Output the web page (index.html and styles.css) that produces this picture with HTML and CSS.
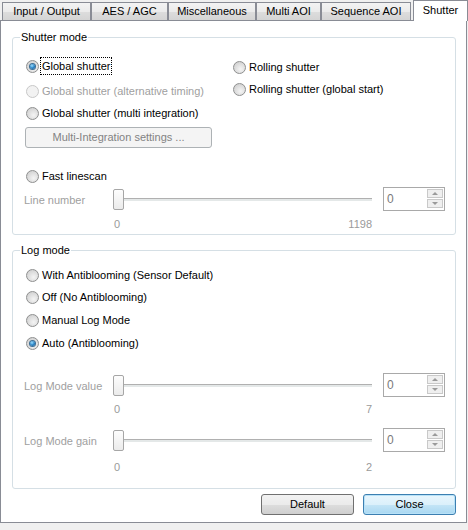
FILE: index.html
```html
<!DOCTYPE html>
<html>
<head>
<meta charset="utf-8">
<link rel="stylesheet" href="styles.css">
</head>
<body>
<div class="tabs">
  <div class="tab w1">Input / Output</div>
  <div class="tab w2">AES / AGC</div>
  <div class="tab w3">Miscellaneous</div>
  <div class="tab w4">Multi AOI</div>
  <div class="tab w5">Sequence AOI</div>
  <div class="tab sel">Shutter</div>
</div>
<div class="panel">
  <div class="group g1">
    <div class="legend">Shutter mode</div>
    <div class="cols">
      <div class="col left">
        <div class="row"><span class="radio on"></span><span class="lbl focus">Global shutter</span></div>
        <div class="row r2 dis"><span class="radio off"></span><span class="lbl">Global shutter (alternative timing)</span></div>
        <div class="row r3"><span class="radio"></span><span class="lbl">Global shutter (multi integration)</span></div>
        <div class="btn-dis">Multi-Integration settings ...</div>
      </div>
      <div class="col right">
        <div class="row"><span class="radio"></span><span class="lbl">Rolling shutter</span></div>
        <div class="row r2b"><span class="radio"></span><span class="lbl">Rolling shutter (global start)</span></div>
      </div>
    </div>
    <div class="row fast"><span class="radio"></span><span class="lbl">Fast linescan</span></div>
    <div class="srow s1">
      <div class="slabel">Line number</div>
      <div class="slider"><span class="thumb"></span><span class="track"></span></div>
      <div class="spin"><span class="val">0</span><span class="arrows"><span class="ar up"></span><span class="ar dn"></span></span></div>
    </div>
    <div class="ticks t1"><span>0</span><span>1198</span></div>
  </div>

  <div class="group g2">
    <div class="legend">Log mode</div>
    <div class="row lr1"><span class="radio"></span><span class="lbl">With Antiblooming (Sensor Default)</span></div>
    <div class="row lr2"><span class="radio"></span><span class="lbl">Off (No Antiblooming)</span></div>
    <div class="row lr3"><span class="radio"></span><span class="lbl">Manual Log Mode</span></div>
    <div class="row lr4"><span class="radio on"></span><span class="lbl">Auto (Antiblooming)</span></div>
    <div class="srow s2">
      <div class="slabel">Log Mode value</div>
      <div class="slider"><span class="thumb"></span><span class="track"></span></div>
      <div class="spin"><span class="val">0</span><span class="arrows"><span class="ar up"></span><span class="ar dn"></span></span></div>
    </div>
    <div class="ticks t2"><span>0</span><span>7</span></div>
    <div class="srow s3">
      <div class="slabel">Log Mode gain</div>
      <div class="slider"><span class="thumb"></span><span class="track"></span></div>
      <div class="spin"><span class="val">0</span><span class="arrows"><span class="ar up"></span><span class="ar dn"></span></span></div>
    </div>
    <div class="ticks t3"><span>0</span><span>2</span></div>
  </div>

  <div class="buttons">
    <div class="btn">Default</div>
    <div class="btn primary">Close</div>
  </div>
</div>
</body>
</html>
```

FILE: styles.css
```css
* { box-sizing: border-box; }
html, body { margin: 0; padding: 0; }
body {
  background: #f0f0f0;
  font-family: "Liberation Sans", Arial, sans-serif;
  font-size: 11px;
  color: #000;
  width: 468px;
  height: 530px;
  overflow: hidden;
}
.tabs {
  display: flex;
  align-items: flex-end;
  height: 20px;
  padding-left: 2px;
}
.tab {
  height: 18px;
  border: 1px solid #898c95;
  border-bottom: none;
  background: linear-gradient(#f3f3f3 0%, #ebebeb 50%, #dddddd 51%, #d4d4d4 100%);
  text-align: center;
  line-height: 17px;
  white-space: nowrap;
}
.w1 { width: 89px; }
.w2 { width: 77px; }
.w3 { width: 88px; }
.w4 { width: 65px; }
.w5 { width: 90px; }
.sel {
  width: 55px;
  height: 21px;
  margin-left: 2px;
  margin-bottom: -1px;
  background: #fff;
  line-height: 19px;
  position: relative;
  z-index: 1;
}
.panel {
  width: 467px;
  height: 503px;
  border: 1px solid #898c95;
  background: #fff;
  padding: 16px 10px 0 11px;
}
.group {
  border: 1px solid #d5dfe5;
  border-radius: 3px;
  display: flex;
  flex-direction: column;
  align-items: flex-start;
}
.legend {
  margin-top: -7px;
  margin-left: 7px;
  padding: 0 1px;
  background: #fff;
  line-height: 13px;
  height: 13px;
}
.g1 { padding-bottom: 3px; }
.cols { display: flex; margin-top: 14px; }
.col { display: flex; flex-direction: column; align-items: flex-start; }
.left { width: 207px; margin-left: 13px; }
.right { padding-top: 1px; }
.row { display: flex; align-items: center; height: 16px; white-space: nowrap; }
.lbl { padding: 0 1px; margin-left: 2px; line-height: 14px; }
.focus { outline: 1px dotted #000; outline-offset: 0; height: 16px; line-height: 16px; }
.r2 { margin-top: 9px; }
.r3 { margin-top: 6px; }
.r2b { margin-top: 6px; }
.dis .lbl { color: #a0a0a0; }
.radio {
  width: 13px;
  height: 13px;
  border-radius: 50%;
  border: 1px solid #8e8f8f;
  background: radial-gradient(circle at 60% 65%, #f4f4f4 0%, #dcdcdc 55%, #c8c8c8 100%);
  display: flex;
  align-items: center;
  justify-content: center;
  flex: none;
}
.radio.off { border-color: #c8c8c8; background: #f2f2f2; }
.radio.on::after {
  content: "";
  width: 5px;
  height: 5px;
  border-radius: 50%;
  background: radial-gradient(circle at 40% 35%, #9ee0ff 0%, #2b86c8 50%, #0d4d86 100%);
  box-shadow: 0 0 0 1px #3c6e95;
}
.btn-dis {
  margin-top: 6px;
  margin-left: -1px;
  width: 187px;
  height: 21px;
  border: 1px solid #adb2b5;
  border-radius: 3px;
  background: #f4f4f4;
  color: #838383;
  text-align: center;
  line-height: 19px;
}
.fast { margin-top: 20px; margin-left: 13px; }
.srow { display: flex; height: 24px; margin-left: 11px; }
.s1 { margin-top: 3px; }
.slabel { width: 89px; color: #a0a0a0; line-height: 24px; padding-top: 1px; }
.slider { width: 259px; position: relative; display: flex; align-items: flex-start; }
.thumb {
  width: 11px;
  height: 21px;
  margin-top: 2px;
  border: 1px solid #a6a6a6;
  border-radius: 2px;
  background: linear-gradient(#fdfdfd, #ebebeb);
  flex: none;
  position: relative;
  z-index: 1;
}
.track {
  flex: 1;
  height: 3px;
  margin-top: 11px;
  border-top: 1px solid #b0b0b0;
  background: #e4e8e8;
}
.spin {
  margin-left: 11px;
  width: 62px;
  height: 24px;
  border: 1px solid #a9a9a9;
  display: flex;
  justify-content: space-between;
  padding: 1px 1px 1px 3px;
}
.val { color: #7a7a7a; line-height: 20px; font-size: 12px; }
.arrows { display: flex; flex-direction: column; gap: 1px; width: 16px; }
.ar {
  height: 9px;
  border: 1px solid #c9c9c9;
  background: #efefef;
  display: flex;
  align-items: center;
  justify-content: center;
}
.ar::after { content: ""; width: 0; height: 0; border-left: 3px solid transparent; border-right: 3px solid transparent; }
.up::after { border-bottom: 3px solid #9a9a9a; }
.dn::after { border-top: 3px solid #9a9a9a; }
.ticks {
  display: flex;
  justify-content: space-between;
  width: 259px;
  margin-left: 100px;
  height: 13px;
  line-height: 13px;
  color: #9a9a9a;
  padding-left: 1px;
}
.t1 { margin-top: 7px; }
.t2 { margin-top: 6px; }
.t3 { margin-top: 9px; }
.g2 { margin-top: 15px; padding-bottom: 14px; }
.g2 .row { margin-left: 13px; }
.lr1 { margin-top: 10px; }
.lr2 { margin-top: 6px; }
.lr3 { margin-top: 7px; }
.lr4 { margin-top: 7px; }
.s2 { margin-top: 22px; }
.s3 { margin-top: 12px; }
.buttons {
  display: flex;
  justify-content: flex-end;
  gap: 9px;
  margin-top: 5px;
}
.btn {
  width: 93px;
  height: 21px;
  border: 1px solid #707070;
  border-radius: 3px;
  background: linear-gradient(#f2f2f2 0%, #ebebeb 50%, #dddddd 51%, #cfcfcf 100%);
  text-align: center;
  line-height: 19px;
}
.primary {
  border-color: #3c7fb1;
  background: linear-gradient(#e8f6fd 0%, #dbf0fb 50%, #c4e5f6 51%, #a9d8f2 100%);
  box-shadow: inset 0 0 0 1px #b8e2f8;
}
```
